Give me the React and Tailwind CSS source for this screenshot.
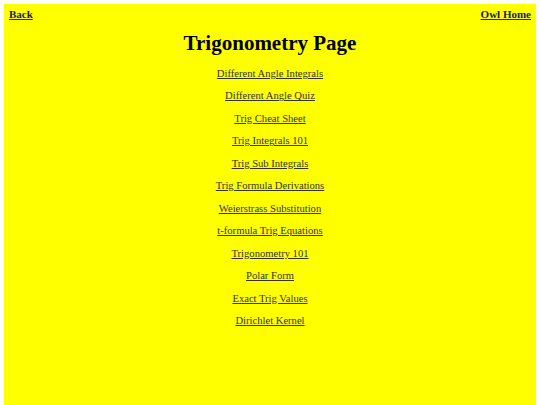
import React from 'react';

const links = [
  'Different Angle Integrals',
  'Different Angle Quiz',
  'Trig Cheat Sheet',
  'Trig Integrals 101',
  'Trig Sub Integrals',
  'Trig Formula Derivations',
  'Weierstrass Substitution',
  't-formula Trig Equations',
  'Trigonometry 101',
  'Polar Form',
  'Exact Trig Values',
  'Dirichlet Kernel',
];

const App = () => {
  return (
    <div className="h-[405px] bg-white pt-[4px] px-[4px] font-['Liberation_Serif',serif]">
      <div className="h-full bg-[#ffff00] px-[5px]">
        <div className="flex justify-between items-center pt-[1px] text-[11px] font-bold leading-[18px]">
          <a href="#" className="underline text-[#1a1a5e]">Back</a>
          <a href="#" className="underline text-[#1a1a5e]">Owl Home</a>
        </div>
        <h1 className="text-center text-[21px] font-bold text-black leading-[30px] mt-[5px]">Trigonometry Page</h1>
        <div className="flex flex-col items-center mt-[5px]">
          {links.map((l) => (
            <a key={l} href="#" className="underline text-[10.6px] leading-[22.45px] text-[#333333]">
              {l}
            </a>
          ))}
        </div>
      </div>
    </div>
  );
};

export default App;
